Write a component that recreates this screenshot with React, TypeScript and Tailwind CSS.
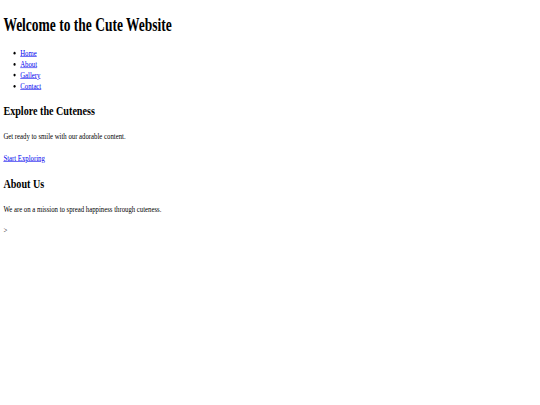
import React from 'react';

const links = ['Home', 'About', 'Gallery', 'Contact'];

const App: React.FC = () => {
  return (
    <div className="w-[540px] h-[405px] overflow-hidden bg-white">
      {/* page was captured at 1280x720 and squeezed into the window */}
      <div className="w-[1280px] h-[720px] origin-top-left scale-x-[0.421875] scale-y-[0.5625] p-2 font-['Liberation_Serif',serif] text-black text-base">
        <header>
          <h1 className="text-[32px] font-bold mt-[18px] mb-[21.44px] leading-[1.15]">Welcome to the Cute Website</h1>
          <nav>
            <ul className="list-disc pl-10 my-4 leading-[19.5px]">
              {links.map(l => (
                <li key={l}>
                  <a href="#" className="text-[#0000ee] underline">{l}</a>
                </li>
              ))}
            </ul>
          </nav>
        </header>
        <section>
          <h2 className="text-2xl font-bold mt-[21px] mb-[19.92px] leading-[1.15]">Explore the Cuteness</h2>
          <p className="my-4 leading-[22px]">Get ready to smile with our adorable content.</p>
          <a href="#" className="text-[#0000ee] underline leading-[1.15]">Start Exploring</a>
        </section>
        <section>
          <h2 className="text-2xl font-bold my-[19.92px] leading-[1.15]">About Us</h2>
          <p className="my-4 leading-[22px]">We are on a mission to spread happiness through cuteness.</p>
        </section>
        &gt;
      </div>
    </div>
  );
};

export default App;
